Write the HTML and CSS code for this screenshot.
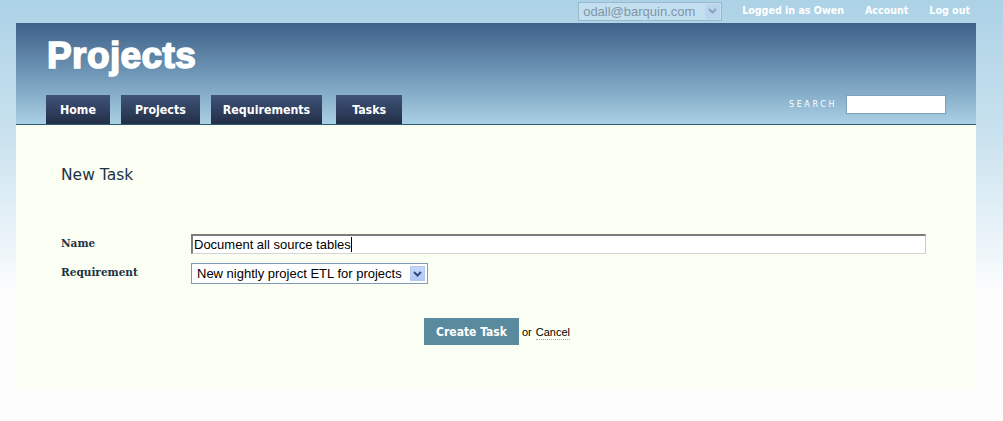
FILE: index.html
```html
<!DOCTYPE html>
<html>
<head>
<meta charset="utf-8">
<link rel="stylesheet" href="styles.css">
</head>
<body>
<div class="page">
  <div class="topbar">
    <div class="usersel"><span class="usersel-text">odall@barquin.com</span><span class="usersel-btn"><svg width="9" height="6" viewBox="0 0 9 6"><path d="M1 1 L4.5 4.5 L8 1" fill="none" stroke="#8aa3bd" stroke-width="2"/></svg></span></div>
    <a class="toplink">Logged in as Owen</a>
    <a class="toplink">Account</a>
    <a class="toplink">Log out</a>
  </div>
  <div class="header">
    <h1 class="title">Projects</h1>
    <div class="navrow">
      <nav class="tabs">
        <a class="tab">Home</a>
        <a class="tab">Projects</a>
        <a class="tab tab-req">Requirements</a>
        <a class="tab tab-last">Tasks</a>
      </nav>
      <div class="search">
        <span class="search-label">SEARCH</span>
        <span class="search-input"></span>
      </div>
    </div>
  </div>
  <div class="content">
    <h2 class="heading">New Task</h2>
    <div class="form">
      <div class="row">
        <label class="label">Name</label>
        <div class="textinput">Document all source tables<span class="caret"></span></div>
      </div>
      <div class="row">
        <label class="label">Requirement</label>
        <div class="select"><span class="select-text">New nightly project ETL for projects</span><span class="select-btn"><svg width="9" height="6" viewBox="0 0 9 6"><path d="M1 1 L4.5 4.5 L8 1" fill="none" stroke="#2d4f86" stroke-width="2"/></svg></span></div>
      </div>
    </div>
    <div class="actions">
      <span class="button">Create Task</span>
      <span class="or">or</span>
      <a class="cancel">Cancel</a>
    </div>
  </div>
</div>
</body>
</html>
```

FILE: styles.css
```css
html, body {
  margin: 0;
  padding: 0;
}
body {
  background: linear-gradient(to bottom, #acd2e6 0px, #c8e1ee 130px, #f4f9fc 270px, #fdfdfd 292px, #fdfdfd 100%);
  min-height: 421px;
  font-family: "DejaVu Sans", Verdana, sans-serif;
}
.page {
  width: 960px;
  margin-left: 16px;
}
.topbar {
  height: 23px;
  display: flex;
  justify-content: flex-end;
  align-items: center;
  padding-right: 6px;
}
.usersel {
  display: flex;
  align-items: center;
  width: 142px;
  height: 17px;
  border: 1px solid #97b8cf;
  background: #c4dff0;
  margin-right: 20px;
  margin-top: -1px;
}
.usersel-text {
  flex: 1;
  font-family: "Liberation Sans", Arial, sans-serif;
  font-size: 13px;
  color: #7e95a8;
  padding-left: 4px;
  line-height: 17px;
}
.usersel-btn {
  width: 15px;
  height: 15px;
  margin-right: 1px;
  background: #bad6ec;
  display: flex;
  align-items: center;
  justify-content: center;
}
.toplink {
  color: #ffffff;
  font-weight: bold;
  font-size: 10.6px;
  font-family: "DejaVu Sans Condensed", "DejaVu Sans", sans-serif;
  margin-left: 21px;
  margin-top: -3px;
}
.toplink:first-of-type {
  margin-left: 0;
}
.header {
  height: 101px;
  background: linear-gradient(to bottom, #3e6188 0%, #6a91b2 45%, #a9d0e4 100%);
  border-bottom: 1px solid #2e5a6c;
  display: flex;
  flex-direction: column;
  justify-content: space-between;
}
.title {
  margin: 0;
  padding: 14px 0 0 31px;
  font-family: "Liberation Sans", Arial, sans-serif;
  font-weight: 900;
  font-size: 37px;
  line-height: 38px;
  color: #ffffff;
  letter-spacing: 0.4px;
  -webkit-text-stroke: 1.6px #ffffff;
}
.navrow {
  display: flex;
  justify-content: space-between;
  align-items: flex-end;
}
.tabs {
  display: flex;
  padding-left: 30px;
}
.tab {
  display: block;
  height: 29px;
  line-height: 30px;
  padding: 0 14px;
  margin-right: 11px;
  background: linear-gradient(to bottom, #3f5479 0%, #2f3f5e 55%, #222e45 100%);
  color: #ffffff;
  font-family: "DejaVu Sans Condensed", "DejaVu Sans", sans-serif;
  font-weight: bold;
  font-size: 12.3px;
}
.tab-req {
  padding: 0 12px;
  margin-right: 14px;
}
.tab-last {
  padding: 0 16px;
}
.search {
  display: flex;
  align-items: center;
  height: 20px;
  margin-bottom: 10px;
  margin-right: 30px;
}
.search-label {
  font-family: "DejaVu Sans", sans-serif;
  font-size: 8px;
  letter-spacing: 2.6px;
  color: #ffffff;
  margin-right: 9px;
}
.search-input {
  display: block;
  width: 98px;
  height: 17px;
  background: #ffffff;
  border: 1px solid #7d9fba;
}
.content {
  background: #fbfff3;
  height: 264px;
  padding: 0 45px;
  box-sizing: border-box;
  overflow: hidden;
}
.heading {
  margin: 0;
  padding-top: 39px;
  font-family: "DejaVu Sans", Tahoma, sans-serif;
  font-weight: normal;
  font-size: 15.5px;
  line-height: 22px;
  color: #1c3345;
}
.form {
  margin-top: 48px;
  display: flex;
  flex-direction: column;
  gap: 9px;
}
.row {
  display: flex;
  align-items: center;
}
.label {
  width: 130px;
  font-family: "DejaVu Serif", Georgia, serif;
  font-weight: bold;
  font-size: 10.5px;
  color: #1c3345;
  margin-top: -3px;
}
.textinput {
  width: 731px;
  height: 17px;
  border-top: 2px solid #7c7c7c;
  border-left: 2px solid #7c7c7c;
  border-right: 1px solid #c9c9c9;
  border-bottom: 1px solid #d5d5d5;
  background: #ffffff;
  font-family: "Liberation Sans", Arial, sans-serif;
  font-size: 13px;
  line-height: 17px;
  padding-left: 1px;
  color: #000000;
  display: flex;
  align-items: center;
}
.caret {
  display: inline-block;
  width: 1px;
  height: 15px;
  background: #000;
}
.select {
  width: 235px;
  height: 19px;
  border: 1px solid #7f9db9;
  background: #ffffff;
  display: flex;
  align-items: center;
}
.select-text {
  flex: 1;
  font-family: "Liberation Sans", Arial, sans-serif;
  font-size: 13px;
  padding-left: 5px;
  color: #000;
}
.select-btn {
  width: 15px;
  height: 15px;
  margin-right: 2px;
  background: linear-gradient(to bottom, #c6d7fb, #b2c8f4);
  border: 1px solid #b5c8ee;
  box-sizing: border-box;
  display: flex;
  align-items: center;
  justify-content: center;
}
.actions {
  margin-top: 34px;
  display: flex;
  align-items: center;
  padding-left: 363px;
}
.button {
  display: block;
  width: 95px;
  height: 27px;
  line-height: 29px;
  text-align: center;
  background: #5a8a9e;
  color: #ffffff;
  font-family: "DejaVu Sans Condensed", "DejaVu Sans", sans-serif;
  font-weight: bold;
  font-size: 12px;
}
.or {
  margin-left: 3px;
  font-family: "Liberation Sans", Arial, sans-serif;
  font-size: 11px;
  color: #000;
}
.cancel {
  margin-left: 4px;
  font-family: "Liberation Sans", Arial, sans-serif;
  font-size: 11px;
  color: #000;
  border-bottom: 1px dotted #9aa6c0;
  padding-bottom: 1px;
  margin-top: 3px;
}
```
